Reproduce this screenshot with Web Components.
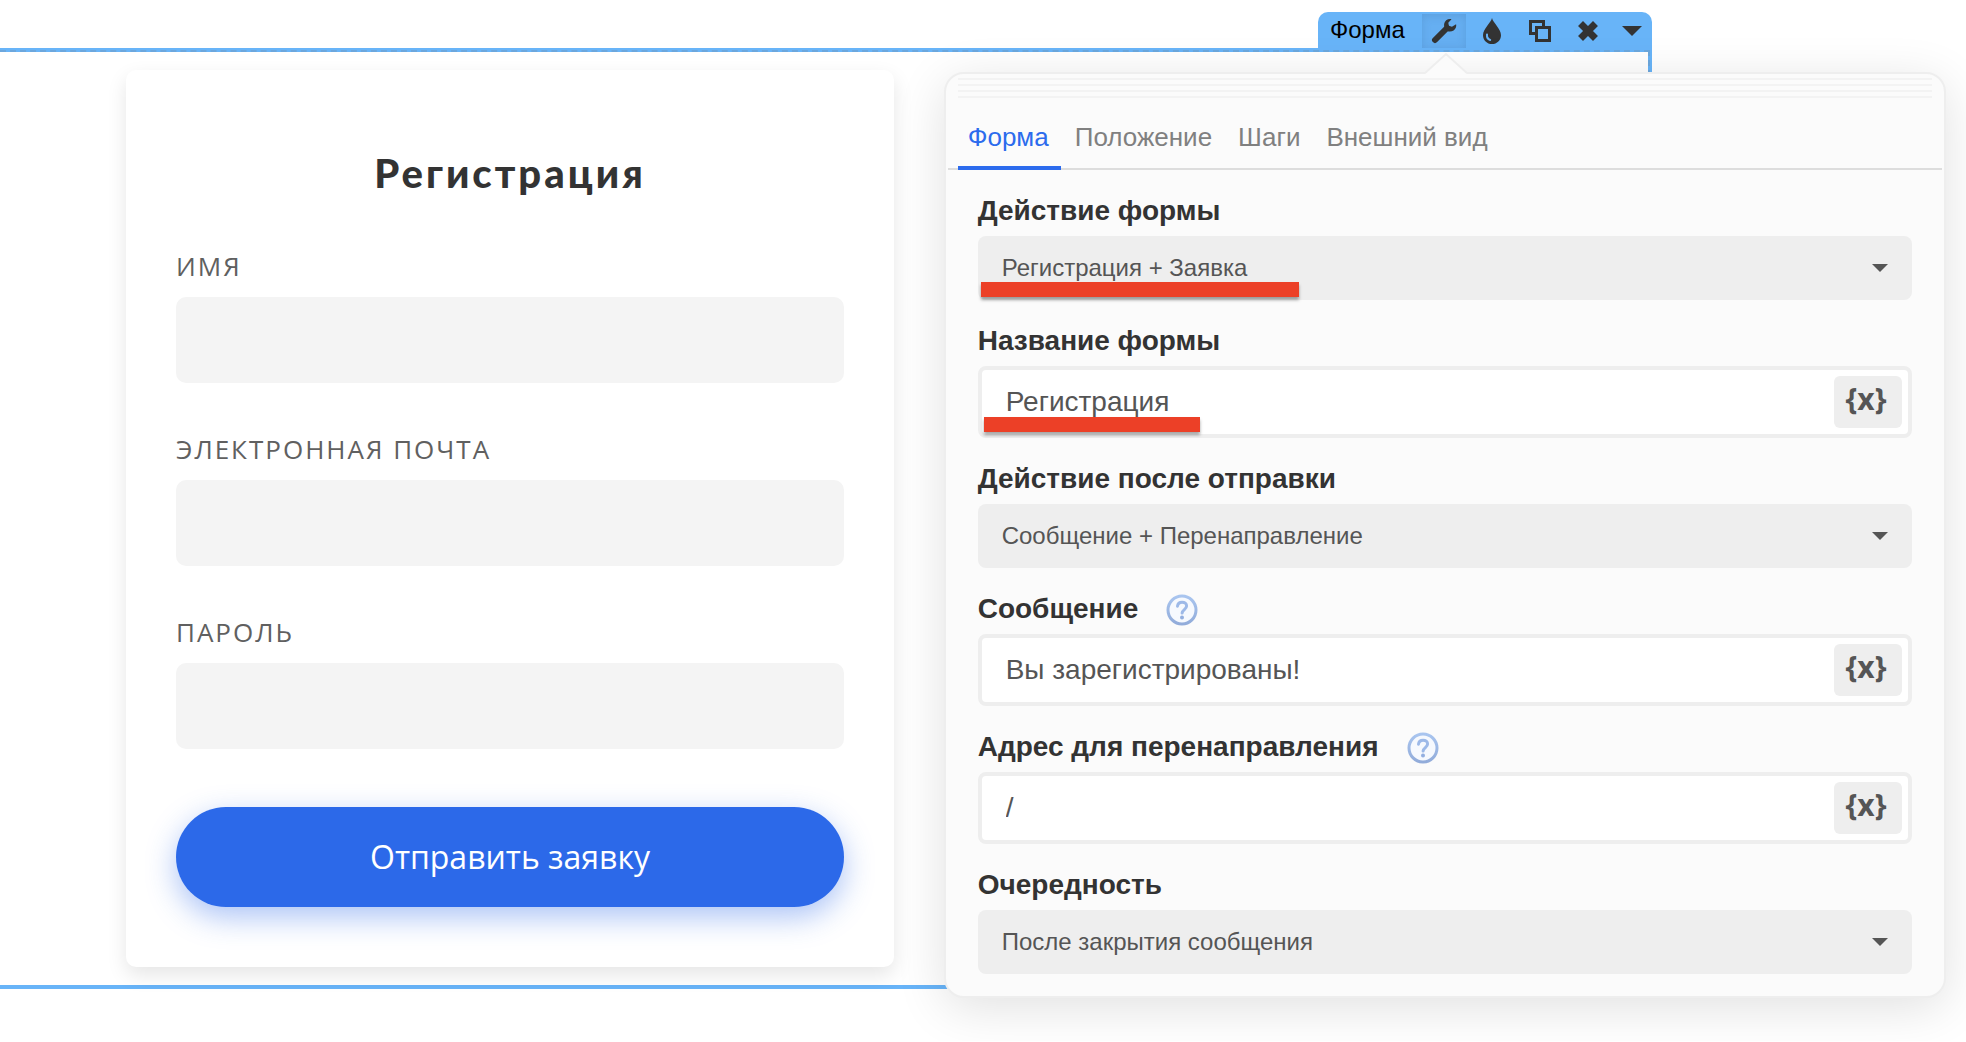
<!DOCTYPE html>
<html lang="ru">
<head>
<meta charset="utf-8">
<meta name="viewport" content="width=device-width, initial-scale=1">
<title>Форма</title>
<style>
    body {
        margin: 0;
        background: #fff;
        color: #333;
        font-family: "Liberation Sans", Arial, sans-serif;
    }
</style>
</head>
<body>
<page-editor>
    <block-toolbar slot="toolbar" name="Форма"></block-toolbar>
    <signup-card heading="Регистрация" action="Отправить заявку">
        <card-field label="Имя" type="text"></card-field>
        <card-field label="Электронная почта" type="email"></card-field>
        <card-field label="Пароль" type="password"></card-field>
    </signup-card>
    <settings-panel slot="panel" tabs="Форма,Положение,Шаги,Внешний вид">
        <setting-select label="Действие формы" value="Регистрация + Заявка">
            <marker-line style="--mark-width: 318px; --mark-inset: 3px"></marker-line>
        </setting-select>
        <setting-input label="Название формы" value="Регистрация">
            <marker-line style="--mark-width: 216px; --mark-inset: 6px"></marker-line>
        </setting-input>
        <setting-select label="Действие после отправки" value="Сообщение + Перенаправление"></setting-select>
        <setting-input label="Сообщение" value="Вы зарегистрированы!" help></setting-input>
        <setting-input label="Адрес для перенаправления" value="/" help></setting-input>
        <setting-select label="Очередность" value="После закрытия сообщения"></setting-select>
    </settings-panel>
</page-editor>

<script>
(function () {
    function makeTemplate(html) {
        let tmpl = document.createElement("template");
        tmpl.innerHTML = html;
        return tmpl;
    }

    class BaseElement extends HTMLElement {
        constructor() {
            super();
            this._shadowRoot = this.attachShadow({ mode: "open" });
            this._shadowRoot.appendChild(this.constructor.template.content.cloneNode(true));
        }
        $(id) {
            return this._shadowRoot.getElementById(id);
        }
    }

    // editing area: selected block with its outline, plus the floating panel
    class PageEditor extends BaseElement {
        static template = makeTemplate(`
          <style>
            :host {
                display: block;
                position: relative;
                padding-top: 12px;
                padding-bottom: 52px;
                overflow: hidden;
            }
            .bar {
                display: flex;
                justify-content: flex-end;
                margin-right: 314px;
            }
            .block {
                position: relative;
                display: flex;
                margin-right: 314px;
                padding: 18px 40px 18px 126px;
                border: 4px solid #68b4f8;
                border-left: 0;
            }
            .block::after {
                content: "";
                position: absolute;
                inset: -2px -2px -4px 0;
                border: 2px dashed rgba(112, 160, 204, .6);
                border-width: 2px 2px 0 0;
                pointer-events: none;
            }
            ::slotted(signup-card) {
                flex: 0 1 768px;
            }
          </style>
          <div class="bar"><slot name="toolbar"></slot></div>
          <div class="block"><slot></slot></div>
          <slot name="panel"></slot>
        `);
    }
    customElements.define("page-editor", PageEditor);

    class BlockToolbar extends BaseElement {
        static template = makeTemplate(`
          <style>
            :host {
                display: flex;
                gap: 4px;
                height: 36px;
                padding: 0 2px 0 12px;
                border-radius: 10px 10px 0 0;
                background: #68b4f8;
                color: #000;
                font-size: 24px;
                line-height: 28px;
            }
            #name {
                width: 88px;
                padding-top: 4px;
                white-space: nowrap;
            }
            button {
                width: 44px;
                height: 34px;
                margin: 2px 0 0;
                padding: 0;
                border: 0;
                background: none;
                color: #333;
            }
            button.active {
                background: #66aff2;
                box-shadow: inset 0 2px 8px rgba(60, 110, 160, .25);
            }
            button.more {
                width: 36px;
            }
            svg {
                display: block;
                margin: 0 auto;
            }
          </style>
          <span id="name"></span>
          <button type="button" class="active" aria-label="Настройки">
            <svg width="26" height="26" viewBox="0 0 26 26"><path fill="none" stroke="currentColor" stroke-width="6" stroke-linecap="round" d="M4 22L16 10"/><path fill="currentColor" d="M20.500 1.200c-3.300-.8-6.800 1.200-7.400 4.800-.2 1.400 0 2.800.6 4l3 3.200c3.300 1.100 7.200-.5 8.300-4 .3-1 .3-2 .1-3l-4.200 2.600-3-1.100-.6-2.900z"/></svg>
          </button>
          <button type="button" aria-label="Цвет">
            <svg width="20" height="28" viewBox="0 0 20 28"><path fill="currentColor" d="M10 1C9 6 1 11.500 1 18.200 1 23.300 5 27 10 27s9-3.700 9-8.800C19 11.500 11 6 10 1z"/><path fill="none" stroke="#68b4f8" stroke-width="2" stroke-linecap="round" d="M5 17.500c-.3 2.800 1 4.800 3.200 5.500"/></svg>
          </button>
          <button type="button" aria-label="Копировать">
            <svg width="24" height="24" viewBox="0 0 24 24"><path fill="none" stroke="currentColor" stroke-width="3" d="M8 14.500H2.500v-12h13V8M8.500 8.500h13v13h-13z"/></svg>
          </button>
          <button type="button" aria-label="Удалить">
            <svg width="24" height="24" viewBox="0 0 24 24"><path fill="none" stroke="currentColor" stroke-width="7" stroke-linecap="square" stroke-linejoin="round" d="M7 7l10 10M17 7L7 17"/></svg>
          </button>
          <button type="button" class="more" aria-label="Ещё">
            <svg width="20" height="10" viewBox="0 0 20 10"><path fill="currentColor" d="M0 0h20L10 10z"/></svg>
          </button>
        `);
        connectedCallback() {
            this.$("name").textContent = this.getAttribute("name");
        }
    }
    customElements.define("block-toolbar", BlockToolbar);

    class SignupCard extends BaseElement {
        static template = makeTemplate(`
          <style>
            :host {
                display: block;
                box-sizing: border-box;
                min-width: 0;
                padding: 78px 50px 60px;
                border-radius: 10px;
                background: #fff;
                box-shadow: 0 8px 20px rgba(0, 0, 0, .1);
            }
            form {
                display: flex;
                flex-direction: column;
                gap: 48px;
            }
            h2 {
                margin: 0 0 2px;
                font: 900 40px/50px Lato, "Open Sans", sans-serif;
                letter-spacing: 3px;
                text-align: center;
            }
            button {
                height: 100px;
                margin: 10px 0 0;
                border: 0;
                border-radius: 50px;
                background: #2c69e9;
                box-shadow: 0 10px 30px rgba(44, 105, 233, .4);
                color: #fff;
                font: 32px/44px "Open Sans", sans-serif;
            }
          </style>
          <form>
            <h2 id="heading"></h2>
            <slot></slot>
            <button type="submit" id="action"></button>
          </form>
        `);
        connectedCallback() {
            this.$("heading").textContent = this.getAttribute("heading");
            this.$("action").textContent = this.getAttribute("action");
        }
    }
    customElements.define("signup-card", SignupCard);

    class CardField extends BaseElement {
        static template = makeTemplate(`
          <style>
            :host {
                display: flex;
                flex-direction: column;
                gap: 13px;
            }
            label {
                color: #606060;
                font: 26px/36px "Open Sans", sans-serif;
                letter-spacing: 2px;
                text-transform: uppercase;
            }
            input {
                box-sizing: border-box;
                width: 100%;
                height: 86px;
                margin: 0;
                padding: 0 24px;
                border: 0;
                border-radius: 10px;
                background: #f4f4f4;
                font: 26px/36px "Open Sans", sans-serif;
            }
          </style>
          <label id="label" for="input"></label>
          <input id="input">
        `);
        connectedCallback() {
            this.$("label").textContent = this.getAttribute("label");
            this.$("input").type = this.getAttribute("type");
        }
    }
    customElements.define("card-field", CardField);

    class SettingsPanel extends BaseElement {
        static template = makeTemplate(`
          <style>
            :host {
                display: block;
                position: absolute;
                top: 72px;
                left: 48%;
                right: 20px;
                box-sizing: border-box;
                padding: 4px 0 22px;
                border: 2px solid #eee;
                border-radius: 20px;
                background: #fbfbfb;
                box-shadow: 0 10px 50px rgba(0, 0, 0, .12);
            }
            .pointer {
                position: absolute;
                left: 48%;
                bottom: 100%;
                display: block;
            }
            .grip {
                height: 20px;
                margin: 0 12px;
                background: repeating-linear-gradient(#f3f3f3 0 2px, transparent 2px 6px);
            }
            nav {
                display: flex;
                gap: 2px;
                margin: 0 2px;
                padding: 0 10px;
                box-shadow: inset 0 -2px #ddd;
            }
            nav a {
                padding: 24px 12px 13px;
                border-bottom: 4px solid transparent;
                color: #808080;
                font-size: 26px;
                line-height: 31px;
                text-decoration: none;
                white-space: nowrap;
            }
            nav a[aria-current] {
                padding-left: 10px;
                border-color: #2c6bed;
                color: #2c6bed;
            }
            .fields {
                display: flex;
                flex-direction: column;
                gap: 24px;
                padding: 24px 32px 0;
            }
          </style>
          <svg class="pointer" width="42" height="22" viewBox="0 0 42 22" aria-hidden="true">
            <path fill="#fbfbfb" d="M0 22L21 2l21 20z"/>
            <path fill="none" stroke="#eee" stroke-width="2" d="M0 21L21 2l21 19"/>
          </svg>
          <div class="grip"></div>
          <nav id="tabs"></nav>
          <div class="fields"><slot></slot></div>
        `);
        connectedCallback() {
            let tabs = this.$("tabs");
            tabs.textContent = "";
            this.getAttribute("tabs").split(",").forEach((name, i) => {
                let a = document.createElement("a");
                a.href = "#tab" + i;
                a.textContent = name;
                if (i === 0) {
                    a.setAttribute("aria-current", "page");
                }
                tabs.appendChild(a);
            });
        }
    }
    customElements.define("settings-panel", SettingsPanel);

    const settingStyle = `
      :host {
          display: block;
          position: relative;
      }
      .head {
          display: flex;
          align-items: flex-start;
          gap: 28px;
          height: 34px;
          margin-bottom: 8px;
      }
      label {
          font-size: 28px;
          font-weight: bold;
          line-height: 34px;
          white-space: nowrap;
      }
      .box {
          display: flex;
          align-items: center;
          box-sizing: border-box;
          color: #555;
      }
    `;

    class SettingSelect extends BaseElement {
        static template = makeTemplate(`
          <style>
            ${settingStyle}
            .box {
                position: relative;
            }
            select {
                appearance: none;
                width: 100%;
                height: 64px;
                margin: 0;
                padding: 0 60px 2px 24px;
                border: 0;
                border-radius: 8px;
                background: #eee;
                color: inherit;
                font: inherit;
                font-size: 24px;
            }
            .arrow {
                position: absolute;
                right: 24px;
                top: 28px;
                pointer-events: none;
            }
          </style>
          <div class="head"><label id="label" for="select"></label></div>
          <div class="box">
            <select id="select"></select>
            <svg class="arrow" width="16" height="8" viewBox="0 0 16 8"><path fill="currentColor" d="M0 0h16L8 8z"/></svg>
          </div>
          <slot></slot>
        `);
        connectedCallback() {
            this.$("label").textContent = this.getAttribute("label");
            this.$("select").replaceChildren(new Option(this.getAttribute("value")));
        }
    }
    customElements.define("setting-select", SettingSelect);

    class SettingInput extends BaseElement {
        static template = makeTemplate(`
          <style>
            ${settingStyle}
            .box {
                height: 72px;
                padding: 0 6px 0 24px;
                border: 4px solid #eee;
                border-radius: 8px;
                background: #fff;
            }
            input {
                flex: 1;
                min-width: 0;
                height: 64px;
                margin: 0;
                padding: 0;
                border: 0;
                background: none;
                color: inherit;
                font: inherit;
                font-size: 28px;
            }
            .var {
                width: 68px;
                height: 52px;
                margin: 0;
                padding: 0 4px 6px 0;
                border: 0;
                border-radius: 6px;
                background: #eee;
                color: #555;
                font: bold 30px/44px "Noto Sans", sans-serif;
            }
            .help {
                align-self: flex-end;
                width: 32px;
                height: 32px;
                margin: 0;
                padding: 0;
                border: 0;
                background: none;
            }
            .help svg {
                display: block;
            }
          </style>
          <div class="head">
            <label id="label" for="input"></label>
            <button type="button" class="help" id="help" aria-label="Справка" hidden>
              <svg width="32" height="32" viewBox="0 0 32 32">
                <defs>
                  <linearGradient id="ring" x1="0" y1="0" x2="0" y2="1">
                    <stop offset="0" stop-color="#a9c5ef"/>
                    <stop offset="1" stop-color="#92acda"/>
                  </linearGradient>
                </defs>
                <circle cx="16" cy="16" r="14" fill="#f6f9fe" stroke="url(#ring)" stroke-width="3"/>
                <path fill="none" stroke="#9db9e8" stroke-width="3" stroke-linecap="round" d="M11.500 12.200c.3-2.700 2.100-4 4.600-4s4.500 1.500 4.500 3.900c0 3.300-4.300 3.700-4.500 7"/>
                <circle cx="16" cy="23.500" r="2" fill="#93afe0"/>
              </svg>
            </button>
          </div>
          <div class="box">
            <input id="input" type="text">
            <button type="button" class="var">{x}</button>
          </div>
          <slot></slot>
        `);
        connectedCallback() {
            this.$("label").textContent = this.getAttribute("label");
            this.$("input").value = this.getAttribute("value");
            this.$("help").hidden = !this.hasAttribute("help");
        }
    }
    customElements.define("setting-input", SettingInput);

    // red highlight drawn over the lower edge of a setting
    class MarkerLine extends BaseElement {
        static template = makeTemplate(`
          <style>
            :host {
                display: block;
                position: absolute;
                left: var(--mark-inset);
                bottom: var(--mark-inset);
                width: var(--mark-width);
                height: 15px;
                background: #ec4027;
                box-shadow: 0 3px 3px rgba(0, 0, 0, .35);
                pointer-events: none;
            }
          </style>
        `);
    }
    customElements.define("marker-line", MarkerLine);
})();
</script>
</body>
</html>
